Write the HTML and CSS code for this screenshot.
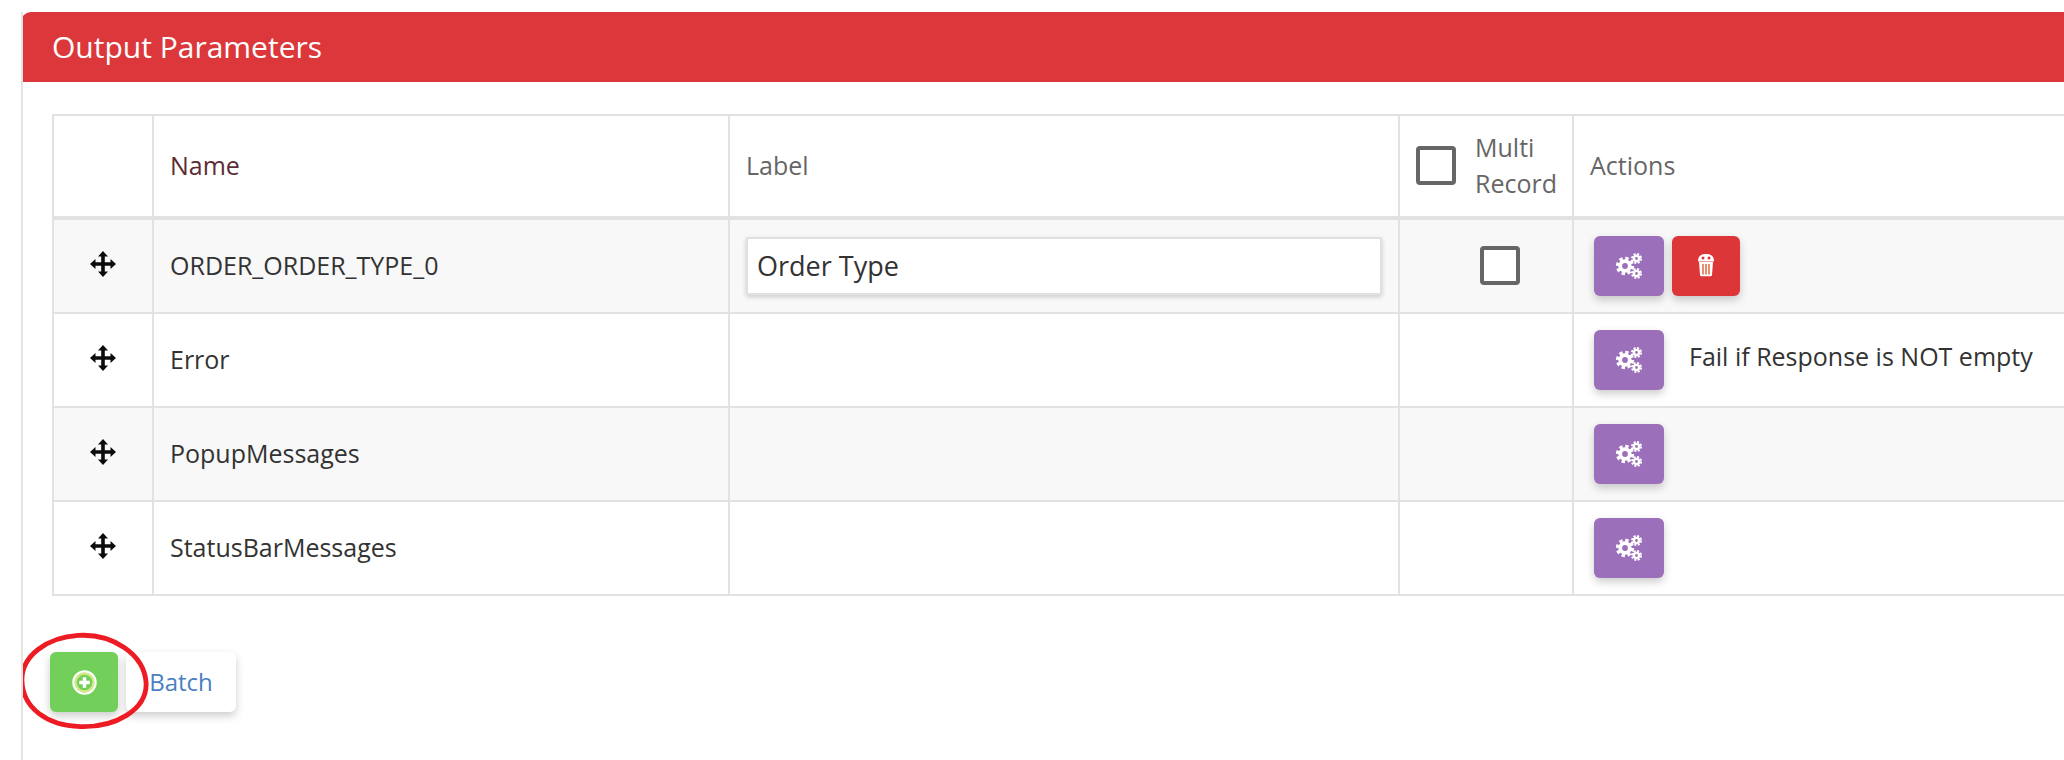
FILE: index.html
```html
<!DOCTYPE html>
<html lang="en">
<head>
<meta charset="utf-8">
<title>Output Parameters</title>
<link rel="stylesheet" href="styles.css">
</head>
<body>
<svg class="defs" width="0" height="0" aria-hidden="true">
  <defs>
    <symbol id="move" viewBox="0 0 26 26">
      <path d="M13 0l5 5.500h-3.200v5.700h5.700V8l5.500 5-5.500 5v-3.200h-5.700v5.700H18L13 26l-5-5.500h3.200v-5.700H5.500V18L0 13l5.500-5v3.200h5.700V5.500H8z" fill="#0c0c0c"/>
    </symbol>
    <symbol id="cogs" viewBox="0 0 28 28">
      <g fill="none" stroke="#fff">
        <circle cx="10" cy="14" r="4.800" stroke-width="3.800"/>
        <circle cx="10" cy="14" r="7.500" stroke-width="3.400" stroke-dasharray="3.300 2.590"/>
        <circle cx="21.500" cy="6.500" r="2.600" stroke-width="2.400"/>
        <circle cx="21.500" cy="6.500" r="4.400" stroke-width="2.200" stroke-dasharray="2 1.460"/>
        <circle cx="21.500" cy="21.500" r="2.600" stroke-width="2.400"/>
        <circle cx="21.500" cy="21.500" r="4.400" stroke-width="2.200" stroke-dasharray="2 1.460"/>
      </g>
    </symbol>
    <symbol id="trash" viewBox="0 0 18 24">
      <path d="M2 9h14l-1 13a1.500 1.500 0 0 1-1.500 1.300h-9A1.500 1.500 0 0 1 3 22z" fill="#fff"/>
      <path d="M6 11v10.500M9 11v10.500M12 11v10.500" stroke="#e8805f" stroke-width="1.800"/>
      <path d="M1 8.500C1 3 4 1 9 1s8 2 8 7.500z" fill="#fff"/>
      <circle cx="6" cy="5" r="1.500" fill="#dc3639"/>
      <circle cx="12" cy="5" r="1.500" fill="#dc3639"/>
    </symbol>
    <symbol id="plus" viewBox="0 0 26 26">
      <circle cx="13" cy="13" r="11.500" fill="#72d05a" stroke="#fff" stroke-width="2.400"/>
      <circle cx="13" cy="13" r="9.200" fill="#72d05a" stroke="#d6ea80" stroke-width="2.200"/>
      <path d="M13 7.500v11M7.500 13h11" stroke="#fff" stroke-width="3.600"/>
    </symbol>
  </defs>
</svg>

<section class="panel">
  <h2 class="panel-title">Output Parameters</h2>
  <div class="panel-body">
    <table class="params">
      <thead>
        <tr>
          <th class="col-move"></th>
          <th class="col-name name-head">Name</th>
          <th class="col-label">Label</th>
          <th class="col-multi">
            <div class="multi-head">
              <span class="check"></span>
              <span>Multi<br>Record</span>
            </div>
          </th>
          <th class="col-actions">Actions</th>
        </tr>
      </thead>
      <tbody>
        <tr class="odd">
          <td class="handle"><svg class="icon-move"><use href="#move"/></svg></td>
          <td>ORDER_ORDER_TYPE_0</td>
          <td class="label-cell"><input class="label-input" type="text" value="Order Type"></td>
          <td class="multi-cell"><span class="check"></span></td>
          <td>
            <div class="actions">
              <button class="btn btn-purple"><svg class="icon-cogs"><use href="#cogs"/></svg></button>
              <button class="btn btn-red"><svg class="icon-trash"><use href="#trash"/></svg></button>
            </div>
          </td>
        </tr>
        <tr>
          <td class="handle"><svg class="icon-move"><use href="#move"/></svg></td>
          <td>Error</td>
          <td></td>
          <td></td>
          <td>
            <div class="actions">
              <button class="btn btn-purple"><svg class="icon-cogs"><use href="#cogs"/></svg></button>
              <span class="note">Fail if Response is NOT empty</span>
            </div>
          </td>
        </tr>
        <tr class="odd">
          <td class="handle"><svg class="icon-move"><use href="#move"/></svg></td>
          <td>PopupMessages</td>
          <td></td>
          <td></td>
          <td>
            <div class="actions">
              <button class="btn btn-purple"><svg class="icon-cogs"><use href="#cogs"/></svg></button>
            </div>
          </td>
        </tr>
        <tr>
          <td class="handle"><svg class="icon-move"><use href="#move"/></svg></td>
          <td>StatusBarMessages</td>
          <td></td>
          <td></td>
          <td>
            <div class="actions">
              <button class="btn btn-purple"><svg class="icon-cogs"><use href="#cogs"/></svg></button>
            </div>
          </td>
        </tr>
      </tbody>
    </table>

    <div class="toolbar">
      <button class="btn btn-green"><svg class="icon-plus"><use href="#plus"/></svg></button>
      <button class="btn btn-batch">Batch</button>
      <svg class="annotation" viewBox="0 0 134 101" aria-hidden="true">
        <path d="M60 3C95 1 128 22 130 52C131 80 98 98 62 97C28 96 3 78 2 50C1 24 28 5 60 3Z" fill="none" stroke="#ed1c24" stroke-width="5"/>
      </svg>
    </div>
  </div>
</section>
</body>
</html>
```
FILE: styles.css
```css
* {
  box-sizing: border-box;
}

html,
body {
  margin: 0;
  height: 760px;
  overflow: hidden;
  background: #fff;
}

body {
  padding: 12px 0 0 21px;
  font-family: "Open Sans", "Noto Sans", sans-serif;
  color: #333;
}

.defs {
  display: block;
  height: 0;
}

.panel {
  width: 2043px;
  height: 748px;
  overflow: hidden;
  border-left: 2px solid #e4e4e4;
}

.panel-title {
  margin: 0 0 0 -2px;
  height: 70px;
  padding-left: 31px;
  background: #dc373b;
  border-top-left-radius: 10px;
  color: #fff;
  font-size: 30px;
  font-weight: 400;
  line-height: 70px;
}

.panel-body {
  padding: 32px 0 0 29px;
}

.params {
  width: 2040px;
  table-layout: fixed;
  border-collapse: collapse;
  font-size: 25px;
}

.params th,
.params td {
  border: 2px solid #e2e2e2;
  padding: 0 0 2px 16px;
  height: 94px;
  text-align: left;
  font-weight: 400;
}

.params tbody tr:first-child td {
  height: 95px;
}

.params th {
  height: 103px;
  border-bottom-width: 4px;
  color: #666;
}

.params .name-head {
  color: #5c2e33;
}

.col-move {
  width: 100px;
}

.col-name {
  width: 576px;
}

.col-label {
  width: 670px;
}

.col-multi {
  width: 174px;
}

.odd td {
  background: #f8f8f8;
}

.params .handle {
  padding: 0;
  text-align: center;
}

.icon-move {
  display: block;
  width: 26px;
  height: 26px;
  margin: -4px auto 0;
}

.multi-head {
  display: flex;
  align-items: center;
  gap: 19px;
  line-height: 36px;
}

.check {
  display: block;
  flex: none;
  width: 40px;
  height: 39px;
  border: 4px solid #666;
  border-radius: 4px;
  background: #fff;
}

.params .multi-cell {
  padding: 0 0 2px 80px;
}

.params .label-cell {
  padding: 0 16px;
}

.label-input {
  display: block;
  width: 100%;
  height: 58px;
  padding: 0 9px 2px;
  border: 2px solid #e0e0e0;
  border-radius: 2px;
  background: #fff;
  box-shadow: 0 2px 5px rgba(0, 0, 0, 0.18);
  font: 400 27px "Open Sans", "Noto Sans", sans-serif;
  color: #333;
  outline: none;
}

.actions {
  display: flex;
  align-items: center;
  gap: 8px;
  padding-left: 4px;
  padding-top: 2px;
}

.btn {
  display: flex;
  align-items: center;
  justify-content: center;
  flex: none;
  height: 60px;
  padding: 0;
  border: 0;
  border-radius: 6px;
  box-shadow: 0 4px 8px rgba(0, 0, 0, 0.2);
}

.btn-purple {
  width: 70px;
  background: #9c6fbb;
}

.btn-red {
  width: 68px;
  background: #dc3639;
}

.icon-cogs {
  width: 28px;
  height: 28px;
}

.icon-trash {
  width: 18px;
  height: 24px;
  margin-top: -2px;
}

.note {
  margin-left: 17px;
  margin-top: -8px;
}

.toolbar {
  position: relative;
  display: flex;
  gap: 8px;
  margin: 56px 0 0 -2px;
}

.btn-green {
  width: 68px;
  background: #72d05a;
}

.icon-plus {
  width: 25px;
  height: 25px;
}

.btn-batch {
  width: 110px;
  padding-bottom: 2px;
  background: #fff;
  color: #4a7fc1;
  font: 400 24px "Open Sans", "Noto Sans", sans-serif;
}

.annotation {
  position: absolute;
  left: -30px;
  top: -20px;
  width: 130px;
  height: 99px;
  pointer-events: none;
  overflow: visible;
}
```
